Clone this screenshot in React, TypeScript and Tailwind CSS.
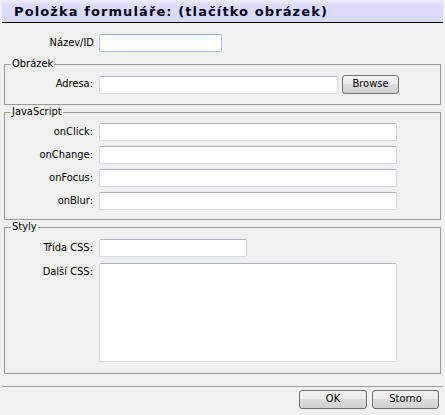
import type { ReactNode } from "react";

const font = { fontFamily: '"DejaVu Sans Condensed", "DejaVu Sans", Tahoma, sans-serif' };

const inputCls =
  "h-[18px] rounded-[2px] border border-[#d6dbe3] border-t-[#adb2bb] bg-white";
const btnCls =
  "flex items-center justify-center rounded-[3px] border border-[#707070] bg-[linear-gradient(to_bottom,#f2f2f2_0%,#ebebeb_50%,#dddddd_50%,#cfcfcf_100%)] text-[11px] text-black";

function Row({ label, children }: { label: string; children: ReactNode }) {
  return (
    <div className="flex items-start">
      <span className="mr-[6px] w-[82px] shrink-0 text-right text-[11px] leading-[18px] text-black">
        {label}
      </span>
      {children}
    </div>
  );
}

function Group({
  title,
  className,
  children,
}: {
  title: string;
  className: string;
  children: ReactNode;
}) {
  return (
    <fieldset className={`mx-[4px] border border-[#9a9a9a] pl-[6px] ${className}`}>
      <legend className="px-[1px] text-[11px] leading-[12px] text-black">{title}</legend>
      {children}
    </fieldset>
  );
}

export default function App() {
  return (
    <div className="h-[415px] w-[445px] overflow-hidden bg-[#f0f0f0]" style={font}>
      {/* title bar */}
      <div className="mx-[2px] h-[23px] border-b border-black bg-[linear-gradient(to_bottom,#ececfc_0%,#dcdcfa_25%,#dadaf8_100%)] pl-[12px] pt-[2px]">
        <h1
          className="text-[13px] font-bold leading-[20px] tracking-[1.1px] text-[#00001a]"
          style={{ fontFamily: '"DejaVu Sans", Verdana, sans-serif' }}
        >
          Položka formuláře: (tlačítko obrázek)
        </h1>
      </div>

      {/* name / id */}
      <div className="mt-[11px] flex items-start">
        <span className="mr-[5px] w-[94px] text-right text-[11px] leading-[18px] text-black">
          Název/ID
        </span>
        <input className="h-[18px] w-[123px] rounded-[2px] border border-[#a9c5e6] border-t-[#8fb4de] bg-white" />
      </div>

      <Group title="Obrázek" className="mt-[6px] pb-[10px] pt-[5px]">
        <Row label="Adresa:">
          <div className="flex items-center">
            <input className={`${inputCls} w-[239px]`} />
            <button type="button" className={`${btnCls} ml-[4px] h-[19px] w-[57px]`}>
              Browse
            </button>
          </div>
        </Row>
      </Group>

      <Group title="JavaScript" className="mt-[1px] pb-[9px] pt-[5px]">
        <div className="flex flex-col gap-[5px]">
          <Row label="onClick:">
            <input className={`${inputCls} w-[298px]`} />
          </Row>
          <Row label="onChange:">
            <input className={`${inputCls} w-[298px]`} />
          </Row>
          <Row label="onFocus:">
            <input className={`${inputCls} w-[298px]`} />
          </Row>
          <Row label="onBlur:">
            <input className={`${inputCls} w-[298px]`} />
          </Row>
        </div>
      </Group>

      <Group title="Styly" className="mt-[1px] pb-[11px] pt-[6px]">
        <div className="flex flex-col gap-[6px]">
          <Row label="Třída CSS:">
            <input className={`${inputCls} w-[148px]`} />
          </Row>
          <Row label="Další CSS:">
            <textarea className="h-[99px] w-[298px] resize-none rounded-[2px] border border-[#d6dbe3] border-t-[#adb2bb] bg-white" />
          </Row>
        </div>
      </Group>

      <div className="mx-[2px] mt-[12px] h-px bg-[#a0a0a0]" />

      <div className="mt-[3px] flex justify-end gap-[5px] pr-[6px]">
        <button type="button" className={`${btnCls} h-[19px] w-[68px]`}>
          OK
        </button>
        <button type="button" className={`${btnCls} h-[19px] w-[67px]`}>
          Storno
        </button>
      </div>
    </div>
  );
}
